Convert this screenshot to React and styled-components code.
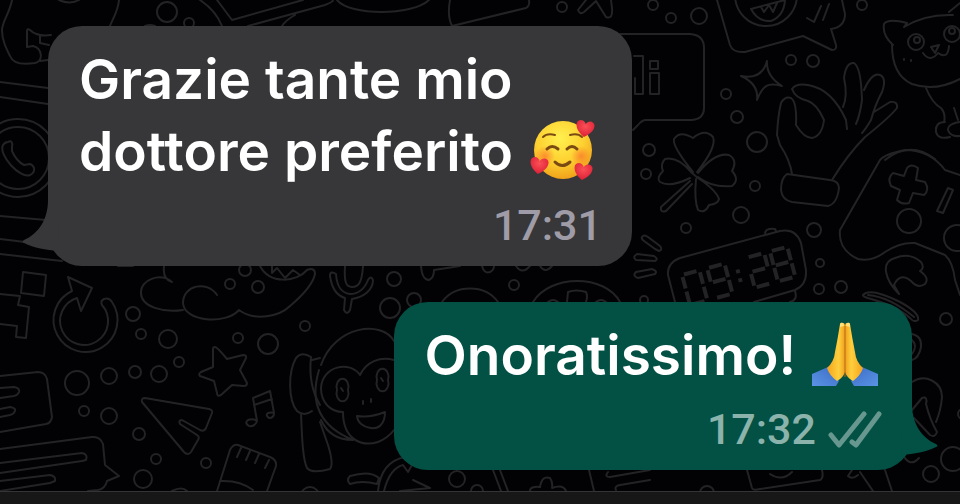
import React from 'react'
import styled, { createGlobalStyle, css } from 'styled-components'

const messages = [
    {
        id: 1,
        text: "Grazie tante mio dottore preferito",
        emoji: "hearts",
        time: "17:31",
        sent: false,
    },
    {
        id: 2,
        text: "Onoratissimo!",
        emoji: "pray",
        time: "17:32",
        sent: true,
    },
]

// [cx, cy, r]
const dots = [
    [167, 12, 10], [189, 23, 5], [562, 7, 5], [133, 314, 7], [141, 334, 5], [168, 339, 9],
    [305, 326, 5], [238, 338, 5], [268, 344, 10], [77, 383, 12], [109, 376, 8], [135, 372, 6],
    [159, 374, 8], [179, 362, 5], [84, 411, 5], [109, 416, 8], [139, 434, 6], [156, 459, 5],
    [206, 463, 5], [143, 479, 9], [245, 270, 6], [230, 284, 5], [258, 287, 6], [394, 279, 7],
    [390, 308, 10], [414, 300, 7], [514, 285, 5], [457, 479, 8], [477, 491, 6], [310, 496, 9],
    [653, 5, 5], [671, 18, 5], [699, 16, 8], [862, 5, 5], [791, 60, 5], [813, 61, 6],
    [726, 94, 5], [737, 117, 6], [757, 142, 10], [649, 150, 6], [646, 174, 5], [755, 186, 5],
    [741, 215, 8], [686, 228, 5], [814, 230, 7], [820, 263, 4], [819, 289, 5], [841, 287, 6],
    [644, 300, 4], [946, 319, 6], [953, 459, 12], [931, 474, 8], [707, 493, 7], [963, 414, 5],
    [18, 158, 39], [18, 158, 31], [916, 42, 8], [952, 34, 8], [917, 40, 3], [952, 31, 3],
    [909, 221, 12], [957, 238, 13], [766, -5, 31],
]

const doodles = [
    // bear
    "M12 0C10 12 2 22 2 30C2 40 6 48 10 56C13 64 22 65 35 63C44 61 42 48 33 46L27 47V31Q27 28 30 30C35 35 44 36 51 35M40 36V43L49 45M40 61L48 60M59 0Q70 5 79 0",
    "M119 0C118 12 112 20 110 26M145 26Q150 24 155 26",
    // envelope
    "M200 0C212 8 218 16 222 26M217 0L232 20L303 0M248 26L325 5Q333 2 333 0M282 26Q286 20 295 15",
    "M337 0C350 16 412 16 429 0M450 0Q447 16 452 26L526 8Q530 6 529 0",
    "M586 0L578 10Q580 15 584 12L596 1L606 17Q613 20 612 8L611 0",
    // stacked cards and phone
    "M0 82L48 88M0 97L48 104M0 216L46 220M0 239L25 242M0 254L62 261M118 266H133",
    "M8 142C11 140 13 142 12 147L12 151C15 158 20 163 24 165L30 164C35 166 36 172 30 175C20 179 -2 155 3 145Q5 142 8 142Z",
    // pixels
    "M23 272L46 275L44 296L21 293ZM0 294L20 296L18 305L29 307L26 338L16 337L17 326L0 324",
    // reload
    "M112 302A32 32 0 1 1 72 291L68 277L92 288L81 311L77 298A24 24 0 1 0 102 305Q100 301 104 299Q109 297 112 302",
    // cloud and teeth
    "M164 266C163 274 165 280 172 282C160 272 140 280 141 293C141 307 164 313 183 310M217 295C207 280 183 285 183 303C184 322 226 325 239 310C255 322 280 316 290 306C303 295 313 284 315 274Q315 267 307 270C297 282 270 285 260 266",
    "M272 273L277 268L285 278L293 270L300 275M272 273V266",
    // star
    "M215 347Q217 347 227 359L243 355Q247 355 246 358L240 370L247 383Q247 386 244 386L232 385L221 395Q217 397 217 393L214 381L200 376Q198 374 201 372L213 367V349Q213 347 215 347Z",
    // paper plane
    "M145 398L209 409Q213 410 212 413L206 428Q204 432 200 430L182 420Q178 420 180 424L197 435Q200 437 198 440L191 452Q188 456 184 452L142 402Q141 398 145 398Z",
    // notes
    "M257 421L253 398L270 391L274 413M254 405L272 399M257 421Q255 427 249 426Q244 423 248 420Q253 418 257 421M274 413Q274 418 269 418Q265 415 268 413Q272 412 274 413",
    // text bubbles
    "M0 376L38 372Q45 372 47 379L52 417Q51 423 46 424L0 432M0 388L14 387Q20 388 19 392Q18 395 14 396L0 398M0 409L10 407Q16 408 15 411Q14 414 10 415L0 417",
    "M0 449L92 437Q100 436 103 444L105 465L119 476L107 481Q105 489 98 490L88 491M0 463L82 453Q88 454 86 460L82 461L0 473M0 481L50 475Q56 476 55 481L50 483L0 491M172 491Q182 486 187 491",
    // memory card
    "M217 491L230 450Q233 444 238 445L270 457Q277 460 276 466L267 491M241 448L237 457M250 451L246 460M259 454L255 463M269 460L265 468M220 481Q240 480 253 490",
    // banana
    "M311 357Q302 351 296 358C288 372 288 400 297 411Q304 417 312 411M311 357Q308 385 320 405M312 360L320 358M301 413C302 440 303 460 307 468Q312 474 330 469Q334 464 328 445L320 422",
    // monkey
    "M321 365C335 325 382 320 394 341M319 370Q304 420 353 440M321 420Q330 440 353 440M360 375C350 360 322 366 321 388C321 402 330 412 343 412C343 440 362 447 378 442Q388 438 394 430M360 375C366 362 380 356 394 360",
    "M337 390a6 8 0 1 0 11 0a6 8 0 1 0 -11 0M377 380a6 8 0 1 0 11 0a6 8 0 1 0 -11 0M341 388l2 3M381 378l2 3M363 401v3M371 399v3M357 416Q370 418 385 412C385 425 378 429 371 428Q358 426 357 416",
    // microphone
    "M345 266C344 282 346 287 352 287C359 287 362 282 363 266M336 274Q330 270 330 276C332 290 338 296 345 298L344 310Q347 316 350 310L352 299C364 297 373 290 373 280Q371 275 368 280C364 290 358 294 350 294C342 293 337 288 336 274",
    "M421 266Q422 280 429 280Q434 278 434 270L460 266M482 266Q484 274 490 272Q494 270 494 266M516 266Q522 275 530 266M540 266Q545 274 552 266",
    "M442 302C455 284 485 284 498 302M533 302C550 274 605 274 620 302M567 302L568 292Q576 289 586 292Q588 296 586 302M548 302Q553 298 558 302M596 302Q601 298 606 302",
    "M350 476Q370 470 379 478L377 484Q362 480 350 484Q346 480 350 476M378 491C380 470 390 460 405 457M384 491C388 475 395 467 403 465L408 472L412 465M413 480L430 488L400 491M493 470L501 491M500 470L508 491M530 491Q530 486 540 487Q542 475 550 478Q553 482 552 488Q563 484 566 491M589 470L594 491M608 472Q604 477 610 477L650 470M616 490Q614 486 620 485L650 480",
    // greeting bubble
    "M620 34H690Q704 35 704 48V108Q704 119 692 120H646Q642 120 638 125L633 130M634 56H643V94H635V78M650 61H658V69H650ZM650 73H659V94H650Z",
    // laughing bubble
    "M717 0L730 45Q733 53 745 52L803 36L832 50Q837 50 836 45L831 29Q845 27 845 14L842 0M751 9L785 0Q784 16 771 21Q758 22 751 9M761 7L764 12L769 5L773 12L777 3M807 18L814 22L821 6M823 20L829 4",
    // sparkle
    "M767 61Q766 76 782 86C768 82 763 85 757 100Q759 84 741 76Q762 80 767 61Z",
    // hand
    "M792 174Q790 160 780 145L777 135Q778 115 781 103Q785 96 791 98Q797 102 796 125Q804 138 812 138Q822 136 824 120Q817 104 808 101Q795 98 792 89Q796 83 808 85Q832 89 846 120L847 129M843 107Q848 96 844 78Q846 62 854 63Q861 67 862 100Q860 115 856 124M864 90Q872 72 880 75Q887 78 882 92Q875 105 871 120Q865 130 862 133M874 112L890 102Q898 101 897 108Q890 117 865 137Q848 154 832 180",
    "M787 174Q781 178 781 190Q782 200 792 202L828 206Q837 204 839 188Q839 181 830 180Z",
    // clover
    "M693 172Q672 146 674 139Q680 130 693 138Q705 128 713 137Q717 147 697 172M692 173Q678 156 665 159Q660 164 663 171Q656 178 660 182Q670 188 690 178M698 173Q715 152 729 155Q738 160 732 171Q740 180 732 186Q712 188 698 177M696 179Q694 200 698 210Q705 214 709 205Q718 204 719 199Q716 190 698 178M690 181L661 207Q660 213 666 211L692 184M692 173L698 178",
    "M642 237Q644 234 648 237L660 246Q663 250 659 251L655 249L644 241Q641 239 642 237M637 254L654 256Q659 259 655 261L636 260Q632 257 637 254M636 272L652 269Q658 271 655 274L638 278Q632 276 636 272",
    // alarm clock
    "M675 302L668 275Q667 263 680 258L780 231Q796 228 801 243L806 270Q807 285 795 290L754 302M765 233Q766 228 775 229L776 231M795 291Q798 300 790 302",
    // cat
    "M893 45Q882 35 884 24Q888 18 907 23L904 27Q925 14 953 15M949 12L960 3M892 45Q892 75 912 84Q935 92 960 79M923 53Q930 63 938 53Q948 60 949 46M931 47L935 53L939 45ZM904 59v1M911 60v1M926 88Q932 103 941 108Q946 114 944 122M954 108L958 120M945 122Q935 122 936 132Q938 140 950 137M960 122Q947 124 948 130Q950 137 960 136M885 160Q910 140 935 159",
    // game pad
    "M960 175L945 170Q930 150 905 150Q885 154 880 160L840 230Q838 250 858 259Q872 262 885 252Q900 242 915 243L945 255Q953 262 955 280L960 295",
    "M907 168Q911 163 918 168L916 180L925 182Q930 190 924 195L913 193L909 203Q902 205 897 200L900 190L891 186Q887 178 893 173L904 176ZM948 188L953 190L943 213L937 211Z",
    // mushroom and lid
    "M899 294C885 280 880 262 895 258Q910 252 921 262Q925 268 920 271Q930 278 925 284Q918 289 911 281Q900 272 894 285L899 294M910 318C890 300 862 299 863 295Q870 287 900 302Q920 313 918 320Q914 323 910 318M868 295Q890 297 914 317",
    "M912 334Q922 336 921 347Q919 358 912 360M912 340Q918 346 912 354M912 382C925 373 942 382 942 397Q941 410 936 422M912 410L922 398Q928 396 926 404Q930 420 937 432Q935 438 930 435L914 418M903 455Q910 468 919 458",
    "M852 470L848 476Q852 480 858 475M860 472L873 491M885 470L892 491M747 470L752 488Q753 491 760 489L820 480Q824 478 822 470M770 474Q782 482 792 472",
]

// seven segments inside an 18 x 31 cell
const segments = {
    a: "M2 0H15",
    b: "M18 2V14",
    c: "M18 17V29",
    d: "M2 31H15",
    e: "M0 17V29",
    f: "M0 2V14",
    g: "M2 15H15",
}

const clockDigits = [
    { x: 0, on: "abcdef" },
    { x: 26, on: "abcdfg" },
    { x: 67, on: "abdeg" },
    { x: 91, on: "abcdefg" },
]

function Wallpaper() {
    return (
        <Doodles viewBox="0 0 960 491" preserveAspectRatio="xMidYMin slice" aria-hidden="true">
            {doodles.map((d) => (<path key={d} d={d} />))}
            {dots.map(([cx, cy, r]) => (<circle key={`${cx}-${cy}-${r}`} cx={cx} cy={cy} r={r} />))}
            <g transform="translate(682 275) rotate(-15)" strokeWidth="4" strokeLinecap="butt">
                {clockDigits.map((digit) => (
                    <g key={digit.x} transform={`translate(${digit.x} 0)`}>
                        {digit.on.split("").map((name) => (<path key={name} d={segments[name]} />))}
                    </g>
                ))}
                <path d="M55 9V13M55 18V22" />
            </g>
        </Doodles>
    )
}

const heart = "M0 8C-5 5 -9 1 -9 -4C-9 -9 -2 -10 0 -5C2 -10 9 -9 9 -4C9 1 5 5 0 8Z"

function HeartsFace() {
    return (
        <Emoji viewBox="0 0 66 66" role="img" aria-label="🥰">
            <defs>
                <radialGradient id="skin" cx="0.45" cy="0.3" r="0.75">
                    <stop offset="0" stopColor="#fff04f" />
                    <stop offset="0.55" stopColor="#fdd030" />
                    <stop offset="1" stopColor="#ee9a17" />
                </radialGradient>
                <radialGradient id="blush">
                    <stop offset="0" stopColor="#fb6a2c" stopOpacity="0.65" />
                    <stop offset="1" stopColor="#fb6a2c" stopOpacity="0" />
                </radialGradient>
                <radialGradient id="heart" cx="0.5" cy="0.35" r="0.65">
                    <stop offset="0" stopColor="#fb5057" />
                    <stop offset="1" stopColor="#dc1f35" />
                </radialGradient>
            </defs>
            <circle cx="34" cy="33" r="29" fill="url(#skin)" />
            <circle cx="16" cy="39" r="10" fill="url(#blush)" />
            <circle cx="52" cy="39" r="10" fill="url(#blush)" />
            <g fill="none" stroke="#7a4a12" strokeWidth="2" strokeLinecap="round">
                <path d="M14 20Q18 16 26 18" />
                <path d="M41 18Q49 16 53 20" />
                <path d="M18 32Q23 27 29 32" strokeWidth="3" />
                <path d="M38 32Q43 27 48 32" strokeWidth="3" />
                <path d="M26 45Q33 52 41 45" strokeWidth="3" />
            </g>
            <g fill="url(#heart)">
                <path d={heart} transform="translate(56 12) rotate(8)" />
                <path d={heart} transform="translate(10 49) rotate(8)" />
                <path d={heart} transform="translate(54 55) rotate(8)" />
            </g>
        </Emoji>
    )
}

function FoldedHand() {
    return (
        <>
            <path d="M0 53Q7 50 16 46L27 60L24 65H0Z" fill="url(#sleeve)" />
            <path d="M28 3Q29 1 31 2Q33 2 33 5V51Q31 57 25 60Q17 54 15 47Q22 41 23 31Q26 16 28 3Z" fill="url(#hand)" />
            <path d="M28 3Q29 1 31 2Q32 2 32 5L28 6Z" fill="#ffe17a" />
        </>
    )
}

function FoldedHands() {
    return (
        <Emoji viewBox="0 0 66 66" role="img" aria-label="🙏">
            <defs>
                <linearGradient id="hand" x1="0" x2="1">
                    <stop offset="0" stopColor="#f3a21d" />
                    <stop offset="0.65" stopColor="#ffcf3d" />
                    <stop offset="1" stopColor="#f0a01f" />
                </linearGradient>
                <linearGradient id="sleeve" x1="0" x2="1" y1="1" y2="0">
                    <stop offset="0" stopColor="#5b93e6" />
                    <stop offset="1" stopColor="#3a6cc4" />
                </linearGradient>
            </defs>
            <FoldedHand />
            <g transform="matrix(-1 0 0 1 66 0)">
                <FoldedHand />
            </g>
            <path d="M33 5V56" stroke="#b66a12" strokeWidth="1" />
        </Emoji>
    )
}

const renderMessage = (message) => (
    <Bubble key={message.id} $sent={message.sent}>
        <Tail viewBox="0 0 40 60" $sent={message.sent} aria-hidden="true">
            <path d="M28 8C28 28 18 42 4 48Q1 50 4 51C14 56 26 58 38 59L40 8Z" />
        </Tail>
        <MessageText>
            {message.text}{" "}
            {message.emoji === "hearts" ? <HeartsFace /> : <FoldedHands />}
        </MessageText>
        <Meta $sent={message.sent}>
            <time>{message.time}</time>
            {message.sent && (
                <Ticks viewBox="0 0 54 38" role="img" aria-label="Delivered">
                    <path d="M3 25L11 35L36 4" />
                    <path d="M24 32L28 35L51 4" />
                </Ticks>
            )}
        </Meta>
    </Bubble>
)

export default function App() {
    return (
        <Container>
            <GlobalStyle />
            <Chat>
                <Wallpaper />
                <MessageList>
                    {messages.map(renderMessage)}
                </MessageList>
            </Chat>
            <BottomBar />
        </Container>
    )
}

const GlobalStyle = createGlobalStyle`
    * {
        box-sizing: border-box;
    }
    body {
        margin: 0;
        background: #020204;
        font-family: Inter, "Liberation Sans", sans-serif;
    }
`

const Container = styled.div`
    display: flex;
    flex-direction: column;
    min-height: 100vh;
`

const Chat = styled.main`
    position: relative;
    flex: 1;
    overflow: hidden;
    background: #020204;
`

const Doodles = styled.svg`
    position: absolute;
    inset: 0;
    width: 100%;
    height: 100%;
    fill: none;
    stroke: #232326;
    stroke-width: 2;
    stroke-linecap: round;
    stroke-linejoin: round;
`

const MessageList = styled.ol`
    position: relative;
    display: flex;
    flex-direction: column;
    gap: 36px;
    margin: 0;
    padding: 26px 48px 20px;
    list-style: none;
`

const Bubble = styled.li`
    position: relative;
    align-self: flex-start;
    max-width: calc(100% - 280px);
    padding: 17px 34px 17px 31px;
    border-radius: 34px;
    background: #373739;
    color: #ffffff;

    ${({ $sent }) => $sent && css`
        align-self: flex-end;
        background: #025144;
    `}
`

const Tail = styled.svg`
    position: absolute;
    bottom: 14px;
    left: -28px;
    width: 40px;
    height: 60px;
    fill: #373739;

    ${({ $sent }) => $sent && css`
        left: auto;
        right: -28px;
        fill: #025144;
        transform: scaleX(-1);
    `}
`

const MessageText = styled.p`
    margin: 0;
    font-size: 55px;
    font-weight: 600;
    line-height: 72px;
`

const Emoji = styled.svg`
    width: 66px;
    height: 66px;
    margin-left: 2px;
    vertical-align: -12px;
`

const Meta = styled.div`
    display: flex;
    align-items: center;
    justify-content: flex-end;
    gap: 12px;
    margin: 14px -4px 0 0;
    color: ${({ $sent }) => ($sent ? "#8bb3ab" : "#9f9ca7")};
    font-family: Roboto, "Liberation Sans", sans-serif;
    font-size: 43px;
    font-weight: 500;
    line-height: 48px;
`

const Ticks = styled.svg`
    width: 54px;
    height: 38px;
    fill: none;
    stroke: #67978f;
    stroke-width: 5;
    stroke-linecap: round;
    stroke-linejoin: round;
`

const BottomBar = styled.footer`
    height: 13px;
    border-top: 1px solid #343436;
    background: #171717;
`
